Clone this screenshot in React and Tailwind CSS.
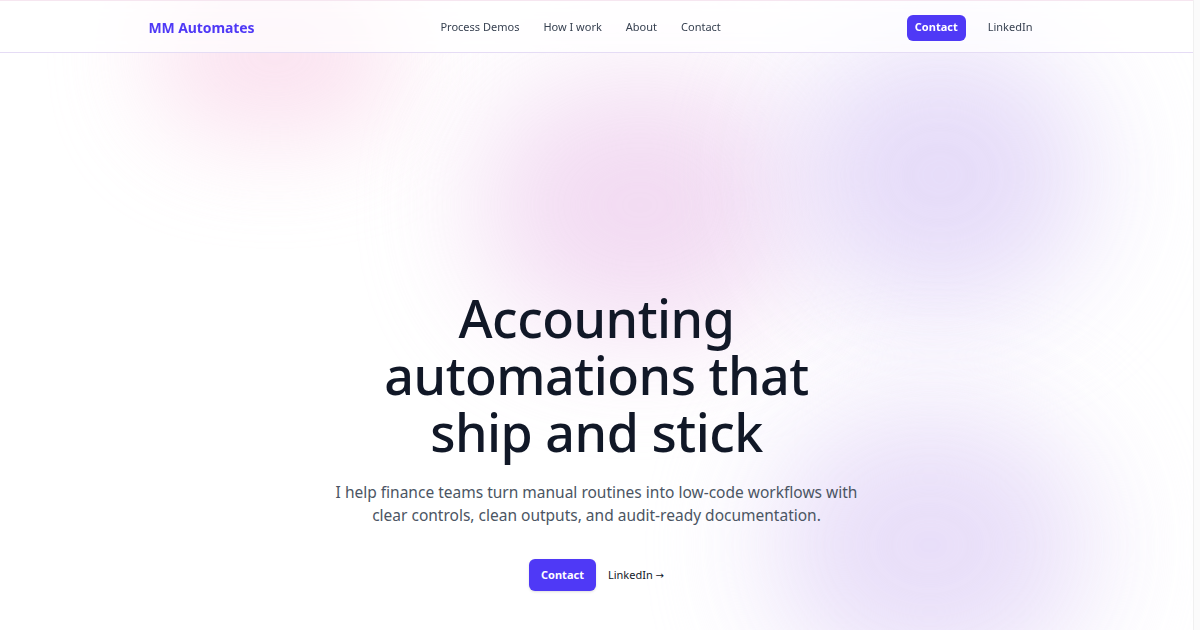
const navLinks = ['Process Demos', 'How I work', 'About', 'Contact']

export default function App() {
  return (
    <div className="flex w-[1200px] h-[630px] overflow-hidden bg-white font-['Noto_Sans',sans-serif]">
      <div className="relative w-[1193px] h-full overflow-hidden bg-white">
        {/* soft background blobs */}
        <div className="absolute left-[150px] top-[-30px] w-[250px] h-[170px] rounded-full bg-[#f9d7ea] opacity-70 blur-[50px]" />
        <div className="absolute left-[480px] top-[80px] w-[320px] h-[250px] rounded-full bg-[#efd2ef] opacity-80 blur-[60px]" />
        <div className="absolute left-[790px] top-[40px] w-[300px] h-[270px] rounded-full bg-[#e3d8f8] opacity-90 blur-[60px]" />
        <div className="absolute left-[770px] top-[410px] w-[320px] h-[270px] rounded-full bg-[#e6dbf8] opacity-90 blur-[60px]" />

        <div className="relative flex flex-col h-full">
          <header className="h-[53px] border-t border-b border-t-[#f6e6f0] border-b-[#e5dcf5] bg-white/70 backdrop-blur">
            <div className="mx-auto max-w-4xl h-full pt-[2px] flex items-center justify-between">
              <span className="text-[14px] font-bold text-[#4f39f6] tracking-[-0.1px]">MM Automates</span>
              <nav className="flex items-center">
                {navLinks.map(link => (
                  <a key={link} className="px-3 text-[11px] text-[#374151]">{link}</a>
                ))}
              </nav>
              <div className="flex items-center gap-[10px]">
                <a className="bg-[#4f39f6] text-white text-[11px] font-bold px-2 h-[26px] flex items-center rounded-md">Contact</a>
                <a className="px-3 text-[11px] text-[#374151]">LinkedIn</a>
              </div>
            </div>
          </header>

          <main className="flex flex-col items-center text-center pt-[236px]">
            <h1 className="text-[#111827] text-[52px] leading-[57px] font-medium tracking-[-0.5px] max-w-[460px]">
              Accounting automations that ship and stick
            </h1>
            <p className="mt-[21px] text-[#4b5563] text-[15.5px] leading-[23px] max-w-[540px]">
              I help finance teams turn manual routines into low-code workflows with clear controls, clean outputs, and audit-ready documentation.
            </p>
            <div className="mt-[32px] flex items-center gap-3">
              <a className="bg-[#4f39f6] text-white text-[11px] font-bold h-8 px-3 flex items-center rounded-md shadow-sm">Contact</a>
              <a className="text-[11px] text-[#111827]">LinkedIn <span className="font-['DejaVu_Sans',sans-serif] text-[10px]">→</span></a>
            </div>
          </main>
        </div>
      </div>
      <div className="w-[7px] h-full bg-[#fbfbfb] border-l border-[#f0f0f0]" />
    </div>
  )
}
